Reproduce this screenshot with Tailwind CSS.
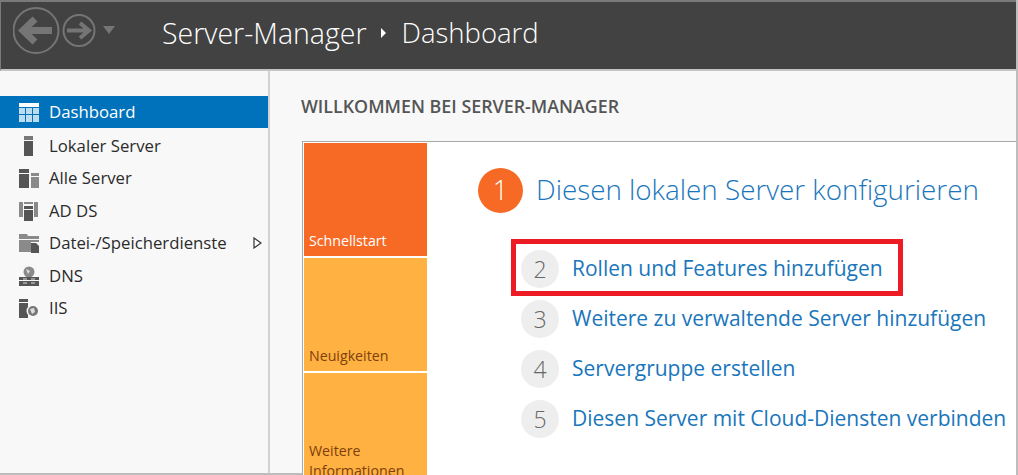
<!DOCTYPE html>
<html lang="de">
<head>
    <meta charset="UTF-8">
    <title>Server-Manager</title>
    <script src="https://cdn.jsdelivr.net/npm/@tailwindcss/browser@4"></script>
</head>
<body class="w-[1018px] h-[475px] overflow-hidden bg-[#f8f8f8] font-['Open_Sans','Noto_Sans',sans-serif]">
    <div class="flex flex-col h-[475px] border-b-2 border-r-2 border-[#bdbdbd]">

        <!-- Titelleiste -->
        <header class="h-[71px] shrink-0 flex items-start bg-[#424242] border-t-2 border-l border-[#7a7a7a] border-b-2 border-b-[#c4c4c4]">
            <svg class="ml-[12px] mt-[5px] shrink-0" width="104" height="50" viewBox="0 0 104 50" fill="none" stroke="#757575">
                <circle cx="23" cy="23.500" r="22.500" stroke-width="2"/>
                <path d="M39 23.500H12M22 12L10 23.500L22 35" stroke-width="7"/>
                <circle cx="66" cy="23.500" r="15.500" stroke-width="2"/>
                <path d="M54 23.500H75M67 16L76 23.500L67 31" stroke-width="4"/>
                <path d="M90 19H102L96 27Z" fill="#757575" stroke="none"/>
            </svg>
            <div class="ml-[45px] h-[62px] flex items-center text-white font-light">
                <span class="text-[28.500px]">Server-Manager</span>
                <svg class="ml-[14px] mr-[14px]" width="7" height="10" viewBox="0 0 7 10"><path d="M1 0L6 5L1 10Z" fill="#fff"/></svg>
                <span class="text-[27.500px]">Dashboard</span>
            </div>
        </header>

        <div class="flex flex-1 min-h-0">
            <!-- Navigation -->
            <nav class="w-[270px] shrink-0 pt-[25px] border-r-2 border-[#d2d2d2] text-[16.750px] text-[#2b2b2b]">
                <a class="flex items-center h-[32px] pl-[19px] gap-[10px] bg-[#0072bc] text-white">
                    <svg width="20" height="19" viewBox="0 0 20 19"><path d="M0 0H20V4H0Z" fill="#fff"/><path d="M0 5H6V11H0ZM7 5H13V11H7ZM14 5H20V11H14ZM0 12H6V19H0ZM7 12H13V19H7ZM14 12H20V19H14Z" fill="#bcdcf0"/></svg>
                    Dashboard
                </a>
                <a class="flex items-center h-[33px] mt-px pl-[19px] gap-[10px]">
                    <svg width="20" height="20" viewBox="0 0 20 20"><path d="M5 0H14V4H5Z" fill="#777"/><path d="M5 5H14V20H5Z" fill="#555"/></svg>
                    Lokaler Server
                </a>
                <a class="flex items-center h-[32px] pl-[19px] gap-[10px]">
                    <svg width="20" height="20" viewBox="0 0 20 20"><path d="M0 1H10V5H0ZM0 6H10V20H0Z" fill="#555"/><path d="M12 5H20V8H12ZM12 9H20V20H12Z" fill="#8a8a8a"/></svg>
                    Alle Server
                </a>
                <a class="flex items-center h-[33px] pl-[19px] gap-[10px]">
                    <svg width="20" height="20" viewBox="0 0 20 20"><path d="M0 1H4V16H0ZM15 1H19V16H15ZM5 1H14V3H5Z" fill="#8a8a8a"/><path d="M5 5H14V8H5ZM5 9H14V20H5Z" fill="#555"/></svg>
                    AD DS
                </a>
                <a class="flex items-center h-[32px] pl-[19px] gap-[10px]">
                    <svg width="20" height="20" viewBox="0 0 20 20"><path d="M0 1H8L9 3H20V6H0ZM0 7H20V9H12V19H0Z" fill="#8a8a8a"/><path d="M12 10H17L20 13V20H12Z" fill="#555"/></svg>
                    Datei-/Speicherdienste
                    <svg class="ml-[16px]" width="9" height="12" viewBox="0 0 9 12"><path d="M1 1L8 6L1 11Z" fill="#fff" stroke="#333" stroke-width="1.200"/></svg>
                </a>
                <a class="flex items-center h-[33px] pl-[19px] gap-[10px]">
                    <svg width="20" height="20" viewBox="0 0 20 20"><circle cx="10" cy="6" r="5.500" fill="#8a8a8a"/><path d="M7 3L11 5L9 8Z" fill="#ddd"/><path d="M0 11H20V14H0Z" fill="#555"/><path d="M0 15H20V20H0Z" fill="#555"/><path d="M4 13H8M12 13H16M4 17H8M12 17H16" stroke="#ddd"/></svg>
                    DNS
                </a>
                <a class="flex items-center h-[32px] pl-[19px] gap-[10px]">
                    <svg width="20" height="20" viewBox="0 0 20 20"><path d="M0 1H9V4H0ZM0 5H9V20H0Z" fill="#555"/><circle cx="14" cy="13" r="6.500" fill="#f8f8f8"/><circle cx="14" cy="13" r="5" fill="#777"/><path d="M11 11L15 10L16 14L13 16Z" fill="#ddd"/></svg>
                    IIS
                </a>
            </nav>

            <!-- Inhalt -->
            <main class="flex-1 min-w-0 pl-[32px] pt-[25px]">
                <h1 class="h-[20px] text-[17.850px] leading-[20px] font-semibold text-[#555] -ml-px whitespace-nowrap">WILLKOMMEN BEI SERVER-MANAGER</h1>
                <div class="relative mt-[25px] h-[340px] flex bg-white border border-r-0 border-b-0 border-[#a8a8a8] p-px">
                    <div class="w-[123px] shrink-0 flex flex-col gap-[2px] text-[14.200px] leading-[20px]">
                        <div class="h-[113px] shrink-0 flex items-end pl-[5px] pb-[5px] bg-[#f66a25] text-white">Schnellstart</div>
                        <div class="h-[113px] shrink-0 flex items-end pl-[5px] pb-[5px] bg-[#ffb142] text-[#7e3f0c]">Neuigkeiten</div>
                        <div class="flex-1 pl-[5px] pt-[68px] bg-[#ffb142] text-[#7e3f0c]">Weitere Informationen</div>
                    </div>
                    <div class="pl-[51px] pt-[24px] text-[#1a76bb]">
                        <div class="flex items-center gap-[13px] h-[46px]">
                            <span class="w-[45px] h-[45px] rounded-full bg-[#f66a25] text-white text-[27px] font-light flex items-center justify-center">1</span>
                            <span class="text-[27.800px] font-light whitespace-nowrap">Diesen lokalen Server konfigurieren</span>
                        </div>
                        <div class="ml-[43px] mt-[37px] flex flex-col gap-[12px] text-[21px] whitespace-nowrap">
                            <div class="flex items-center gap-[13px] h-[38px]">
                                <span class="w-[38px] h-[38px] rounded-full bg-[#eeeeee] text-[#666] text-[23px] font-light flex items-center justify-center">2</span>
                                Rollen und Features hinzufügen
                            </div>
                            <div class="flex items-center gap-[13px] h-[38px]">
                                <span class="w-[38px] h-[38px] rounded-full bg-[#eeeeee] text-[#666] text-[23px] font-light flex items-center justify-center">3</span>
                                Weitere zu verwaltende Server hinzufügen
                            </div>
                            <div class="flex items-center gap-[13px] h-[38px]">
                                <span class="w-[38px] h-[38px] rounded-full bg-[#eeeeee] text-[#666] text-[23px] font-light flex items-center justify-center">4</span>
                                Servergruppe erstellen
                            </div>
                            <div class="flex items-center gap-[13px] h-[38px]">
                                <span class="w-[38px] h-[38px] rounded-full bg-[#eeeeee] text-[#666] text-[23px] font-light flex items-center justify-center">5</span>
                                Diesen Server mit Cloud-Diensten verbinden
                            </div>
                        </div>
                    </div>
                    <!-- Markierung -->
                    <div class="absolute left-[208px] top-[97px] w-[392px] h-[57px] border-[5px] border-[#ed1c24]"></div>
                </div>
            </main>
        </div>
    </div>
</body>
</html>
